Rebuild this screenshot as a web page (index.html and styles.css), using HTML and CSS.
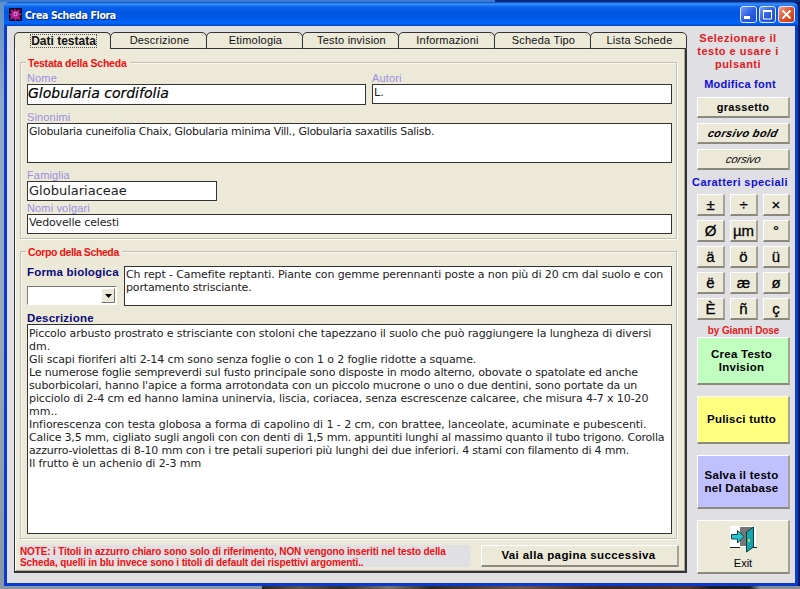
FILE: index.html
```html
<!DOCTYPE html>
<html lang="it">
<head>
<meta charset="utf-8">
<title>Crea Scheda Flora</title>
<link rel="stylesheet" href="styles.css">
</head>
<body>
<div class="window">
  <header class="titlebar">
    <svg class="app-icon" width="13" height="13" viewBox="0 0 13 13">
      <rect width="13" height="13" fill="#18051f"/>
      <path d="M6 0l1 3 4-2-1 4 3 1-3 2 2 4-4-1-2 2-1-3-4 2 1-4-2-2 3-1-2-4 4 2z" fill="#b3208c"/>
      <circle cx="6.500" cy="6" r="2.200" fill="#e87ad0"/><circle cx="6.500" cy="6.200" r="1" fill="#702080"/>
    </svg>
    <h1>Crea Scheda Flora</h1>
    <div class="controls">
      <span class="ctl"><svg width="15" height="15" viewBox="0 0 15 15"><path d="M3 10.500h6" stroke="#fff" stroke-width="3"/></svg></span>
      <span class="ctl"><svg width="15" height="15" viewBox="0 0 15 15"><path d="M3 4h9M3.500 3v9h8V3" stroke="#fff" fill="none"/><path d="M3 4h9" stroke="#fff" stroke-width="2"/></svg></span>
      <span class="ctl close"><svg width="15" height="15" viewBox="0 0 15 15"><path d="M3.500 3.500l8 8M11.500 3.500l-8 8" stroke="#fff" stroke-width="2"/></svg></span>
    </div>
  </header>
  <div class="client">
    <main class="notebook">
      <nav class="tabs">
        <div class="tab active"><span class="focus">Dati testata</span></div>
        <div class="tab">Descrizione</div>
        <div class="tab">Etimologia</div>
        <div class="tab">Testo invision</div>
        <div class="tab">Informazioni</div>
        <div class="tab">Scheda Tipo</div>
        <div class="tab">Lista Schede</div>
      </nav>
      <section class="page">
        <div class="group head">
          <div class="legend legend-head"><span>Testata della Scheda</span></div>
          <div class="row names">
            <div class="field nome"><label>Nome</label><div class="box species">Globularia cordifolia</div></div>
            <div class="field autori"><label>Autori</label><div class="box">L.</div></div>
          </div>
          <div class="field sinonimi"><label>Sinonimi</label><div class="box">Globularia cuneifolia Chaix, Globularia minima Vill., Globularia saxatilis Salisb.</div></div>
          <div class="field famiglia"><label>Famiglia</label><div class="box">Globulariaceae</div></div>
          <div class="field volgari"><label>Nomi volgari</label><div class="box">Vedovelle celesti</div></div>
        </div>
        <div class="group corpo">
          <div class="legend legend-corpo"><span>Corpo della Scheda</span></div>
          <div class="row forma">
            <div class="forma-left"><label class="strong">Forma biologica</label>
              <div class="combo"><span class="drop"><svg width="7" height="4" viewBox="0 0 7 4"><path d="M0 0h7L3.500 4z"/></svg></span></div>
            </div>
            <div class="box forma-text"><p class="f1">Ch rept - Camefite reptanti. Piante con gemme perennanti poste a non più di 20 cm dal suolo e con</p><p class="f2">portamento strisciante.</p></div>
          </div>
          <label class="strong descr-label">Descrizione</label>
          <div class="box descr">
            <p class="d1">Piccolo arbusto prostrato e strisciante con stoloni che tapezzano il suolo che può raggiungere la lungheza di diversi</p>
            <p class="d2">dm.</p>
            <p class="d3">Gli scapi fioriferi alti 2-14 cm sono senza foglie o con 1 o 2 foglie ridotte a squame.</p>
            <p class="d4">Le numerose foglie sempreverdi sul fusto principale sono disposte in modo alterno, obovate o spatolate ed anche</p>
            <p class="d5">suborbicolari, hanno l'apice a forma arrotondata con un piccolo mucrone o uno o due dentini, sono portate da un</p>
            <p class="d6">picciolo di 2-4 cm ed hanno lamina uninervia, liscia, coriacea, senza escrescenze calcaree, che misura 4-7 x 10-20</p>
            <p class="d7">mm..</p>
            <p class="d8">Infiorescenza con testa globosa a forma di capolino di 1 - 2 cm, con brattee, lanceolate, acuminate e pubescenti.</p>
            <p class="d9">Calice 3,5 mm, cigliato sugli angoli con con denti di 1,5 mm. appuntiti lunghi al massimo quanto il tubo trigono. Corolla</p>
            <p class="d10">azzurro-violettas di 8-10 mm con i tre petali superiori più lunghi dei due inferiori. 4 stami con filamento di 4 mm.</p>
            <p class="d11">Il frutto è un achenio di 2-3 mm</p>
          </div>
        </div>
        <footer class="foot">
          <div class="note"><p class="n1">NOTE: i Titoli in azzurro chiaro sono solo di riferimento, NON vengono inseriti nel testo della</p><p class="n2">Scheda, quelli in blu invece sono i titoli di default dei rispettivi argomenti..</p></div>
          <button class="btn next">Vai alla pagina successiva</button>
        </footer>
      </section>
    </main>
    <aside class="side">
      <div class="hint">Selezionare il<br>testo e usare i<br>pulsanti</div>
      <div class="caption mod">Modifica font</div>
      <div class="fonts">
        <button class="btn bold">grassetto</button>
        <button class="btn bold ital"><span>corsivo bold</span></button>
        <button class="btn thin"><span>corsivo</span></button>
      </div>
      <div class="caption car">Caratteri speciali</div>
      <div class="chars">
        <button class="btn">±</button><button class="btn">÷</button><button class="btn">×</button>
        <button class="btn">Ø</button><button class="btn">µm</button><button class="btn">°</button>
        <button class="btn">ä</button><button class="btn">ö</button><button class="btn">ü</button>
        <button class="btn">ë</button><button class="btn">æ</button><button class="btn">ø</button>
        <button class="btn">È</button><button class="btn">ñ</button><button class="btn">ç</button>
      </div>
      <div class="by">by Gianni Dose</div>
      <div class="actions">
        <button class="btn crea">Crea Testo<br>Invision</button>
        <button class="btn pulisci">Pulisci tutto</button>
        <button class="btn salva">Salva il testo<br>nel Database</button>
        <button class="btn exit">
          <svg width="27" height="27" viewBox="0 0 27 27">
            <path d="M0 0h26v21H0z" fill="#fff"/>
            <path d="M10 1h14v19H10z" fill="#777"/>
            <path d="M0 21.500h10M22 21.500h5" stroke="#222"/>
            <path d="M1.500 8.500h6v-4l6.500 6-6.500 6.500v-4h-6z" fill="#28c4cc" stroke="#104850"/>
            <path d="M16.500 6L23.500 1v20l-7 5z" fill="#18a6ae" stroke="#083a40"/>
            <path d="M19 13v3" stroke="#e8e040" stroke-width="1.500"/>
          </svg>
          <span>Exit</span>
        </button>
      </div>
    </aside>
  </div>
</div>
</body>
</html>
```
FILE: styles.css
```css
* { box-sizing: border-box; }
html, body { margin: 0; height: 589px; overflow: hidden; }
body {
  padding: 2px 2px 3px 4px;
  font-family: "Liberation Sans", Arial, sans-serif;
  background:
    linear-gradient(90deg, transparent 262px, #2a2626 262px, #5a5350 300px, #302c2c 340px, #77716c 390px, #2b2724 430px, #6b5249 520px, #3b2723 600px, #50372e 690px, #1b1d26 710px, #20232c 750px, #8a8f96 760px) 0 586px / 800px 3px no-repeat,
    linear-gradient(90deg, #3c7ad0 0 495px, #0a2a80 495px) 0 0 / 800px 2px no-repeat,
    linear-gradient(90deg, transparent 790px, #0a1c60 790px) 0 0 / 800px 586px no-repeat,
    linear-gradient(#5f8fc8, #8fa9c8 100px, #9aa9bc 300px, #8897a8 586px);
}
p, h1 { margin: 0; }
.window {
  height: 584px;
  width: 794px;
  padding: 0 3px 3px;
  border-radius: 6px 6px 0 0;
  background: #0a3ad0;
  overflow: hidden;
}
.titlebar {
  height: 24px;
  margin: 0 -3px;
  padding: 1px 4px 0 5px;
  display: flex;
  align-items: center;
  background: linear-gradient(#0a49c4, #3a92fa 2px, #0a62ee 5px, #0055e2 10px, #005ae8 16px, #0068fc 21px, #0040c0);
}
h1 {
  flex: 1;
  margin-left: 3px;
  font: bold 10.500px/14px "DejaVu Sans Condensed", "DejaVu Sans", sans-serif;
  letter-spacing: -.35px;
  color: #fff;
  text-shadow: 1px 1px #0a2a80;
}
.controls { display: flex; gap: 2px; margin-right: -1px; }
.ctl {
  width: 17px; height: 17px;
  border: 1px solid #dfe8fb;
  border-radius: 3px;
  background: linear-gradient(135deg, #7a9df5, #2f5fe4 50%, #1f4cd0);
}
.ctl svg { display: block; }
.close { background: linear-gradient(135deg, #f0a088, #e0512c 50%, #c83a14); }
.client { height: 557px; display: flex; background: #e0dfe3; padding: 6px 6px 0 7px; }
.notebook { width: 673px; height: 541px; }
.tabs { display: flex; height: 17px; }
.tab {
  flex: 1;
  margin-left: -1px;
  padding-left: 2px;
  font-size: 11px;
  line-height: 15px;
  letter-spacing: .2px;
  text-align: center;
  color: #111;
  background: #ece9d8;
  border: 1px solid #333;
  border-radius: 5px 5px 0 0;
}
.tab.active { margin-left: 0; border-bottom: 0; font-weight: bold; font-size: 12px; line-height: 16px; letter-spacing: 0; }
.focus { outline: 1px dotted #555; outline-offset: -1px; padding: 0 1px; }
.page {
  height: 524px;
  padding: 6px 8px 0 5px;
  background: #ece9d8;
  border: solid #333;
  border-width: 0 2px 2px 1px;
  box-shadow: inset 1px 0 #fff, inset -1px -1px #aca899;
}
.group { border: 1px solid #c3c0b0; box-shadow: 1px 1px #fff, inset 1px 1px #f8f6ee; padding: 0 4px 0 6px; }
.head { margin-top: 7px; height: 177px; }
.corpo { margin-top: 12px; height: 288px; }
.legend { height: 14px; margin-top: -7px; font-weight: bold; font-size: 10.500px; line-height: 14px; color: #f01010; white-space: nowrap; }
.legend span { display: inline-block; background: #ece9d8; padding: 0 3px 0 2px; margin-left: -1px; }
.legend-head { letter-spacing: -.23px; }
.legend-corpo { letter-spacing: -.4px; }
.row { display: flex; }
.box {
  background: #fff;
  border: 1px solid #333;
  font-family: "DejaVu Sans", sans-serif;
  font-size: 11px;
  line-height: 13px;
  padding: 1px;
  color: #222;
  white-space: nowrap;
}
label { display: block; font-size: 11px; line-height: 12px; height: 12px; color: #9a8fe0; letter-spacing: .15px; }
.names { gap: 6px; margin-top: 2px; }
.nome { width: 339px; }
.autori { width: 300px; }
.nome .box { height: 21px; }
.autori .box { height: 20px; }
.field { white-space: nowrap; }
.nome .species { font: italic 14px/17px "DejaVu Sans", sans-serif; padding: 0; color: #000; -webkit-text-stroke: .2px #000; }
.sinonimi { margin-top: 6px; width: 645px; }
.sinonimi .box { height: 40px; letter-spacing: -.31px; }
.famiglia { margin-top: 6px; width: 190px; }
.famiglia .box { height: 20px; font-size: 13px; line-height: 17px; padding-top: 0; }
.volgari { margin-top: 1px; width: 645px; }
.volgari .box { height: 20px; letter-spacing: -.15px; }
.forma { margin-top: 7px; gap: 7px; }
.forma-left { width: 90px; }
.strong { color: #0a0a78; font-weight: bold; white-space: nowrap; font-size: 11.500px; letter-spacing: .2px; }
.forma-text { width: 548px; height: 40px; }
.f1 { letter-spacing: -.115px; }
.f2 { letter-spacing: -.15px; }
.combo { margin-top: 8px; height: 19px; width: 90px; border: 1px solid #777; border-right-color: #fff; border-bottom-color: #fff; background: #fff; display: flex; justify-content: flex-end; padding: 1px; }
.drop { width: 14px; background: #ece9d8; border: 1px solid #fff; border-right-color: #777; border-bottom-color: #777; display: flex; align-items: center; justify-content: center; }
.descr-label { margin-top: 6px; }
.descr { width: 645px; height: 210px; padding-top: 2px; }
.d1 { letter-spacing: -.12px; }
.d3 { letter-spacing: -.126px; }
.d4 { letter-spacing: -.16px; }
.d5 { letter-spacing: -.135px; }
.d6 { letter-spacing: -.105px; }
.d8 { letter-spacing: -.055px; }
.d9 { letter-spacing: -.19px; }
.d10 { letter-spacing: -.185px; }
.d11 { letter-spacing: -.09px; }
.foot { display: flex; justify-content: space-between; margin-top: 6px; height: 23px; }
.note { width: 450px; height: 22px; background: #e0dfe3; color: #f01010; font-weight: bold; font-size: 10px; line-height: 11px; padding-top: 1px; white-space: nowrap; }
.n1 { letter-spacing: -.15px; }
.n2 { letter-spacing: -.11px; }
.btn {
  margin: 0; padding: 0;
  font-family: inherit;
  font-size: 11px;
  line-height: 13px;
  color: #000;
  background: #ece9d8;
  border: 1px solid #fff;
  border-right: 2px solid #a5a294;
  border-bottom: 2px solid #8c897c;
  white-space: nowrap;
}
.next { width: 198px; height: 22px; font-weight: bold; font-size: 11.500px; letter-spacing: .4px; margin-right: -2px; padding-right: 2px; }
.side { width: 93px; margin-left: 10px; font-weight: bold; text-align: center; }
.hint { color: #e02020; font-size: 11px; line-height: 13px; letter-spacing: .5px; margin: 0 2px 0 -9px; white-space: nowrap; }
.caption { color: #1010d8; font-size: 11px; line-height: 13px; height: 13px; white-space: nowrap; }
.mod { margin: 7px 7px 0 0; letter-spacing: .25px; }
.fonts { display: grid; gap: 5px; margin-top: 6px; }
.fonts .btn { height: 21px; width: 93px; }
.bold { font-weight: bold; letter-spacing: .35px; }
.ital span, .thin span { display: inline-block; transform: skewX(-14deg); font-style: italic; }
.car { margin: 6px 0 0 -7px; letter-spacing: .4px; }
.chars { display: grid; grid-template-columns: 28px 28px 27px; column-gap: 5px; row-gap: 4px; margin-top: 5px; }
.chars .btn { height: 22px; font-size: 15px; line-height: 19px; -webkit-text-stroke: .3px #000; }
.by { color: #e02020; font-size: 10px; line-height: 13px; margin-top: 4px; height: 13px; letter-spacing: -.1px; }
.actions { display: grid; grid-template-rows: 48px 48px 54px 54px; row-gap: 11px; }
.actions .btn { font-weight: bold; font-size: 11.500px; letter-spacing: .25px; padding-right: 3px; }
.actions .exit { font-size: 11px; font-weight: normal; letter-spacing: 0; display: flex; flex-direction: column; align-items: center; justify-content: flex-start; padding: 5px 0 0; }
.actions .crea { background: #c0ffc0; }
.actions .pulisci { background: #ffff80; }
.actions .salva { background: #c0c0ff; }
.exit span { margin-top: 4px; }
```
